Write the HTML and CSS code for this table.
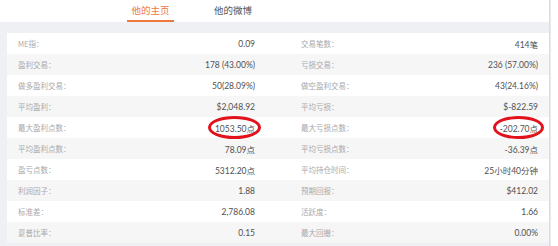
FILE: index.html
```html
<!DOCTYPE html>
<html lang="zh">
<head>
<meta charset="utf-8">
<link rel="stylesheet" href="styles.css">
</head>
<body>
<div class="panel">
  <header class="tabs">
    <span class="tab active">他的主页</span>
    <span class="tab">他的微博</span>
  </header>
  <div class="card">
    <div class="row">
      <div class="cell"><span class="label">ME指：</span><span class="value">0.09</span></div>
      <div class="cell"><span class="label">交易笔数：</span><span class="value">414笔</span></div>
    </div>
    <div class="row">
      <div class="cell"><span class="label">盈利交易：</span><span class="value">178 (43.00%)</span></div>
      <div class="cell"><span class="label">亏损交易：</span><span class="value">236 (57.00%)</span></div>
    </div>
    <div class="row">
      <div class="cell"><span class="label">做多盈利交易：</span><span class="value">50(28.09%)</span></div>
      <div class="cell"><span class="label">做空盈利交易：</span><span class="value">43(24.16%)</span></div>
    </div>
    <div class="row">
      <div class="cell"><span class="label">平均盈利：</span><span class="value">$2,048.92</span></div>
      <div class="cell"><span class="label">平均亏损：</span><span class="value">$-822.59</span></div>
    </div>
    <div class="row">
      <div class="cell"><span class="label">最大盈利点数：</span><span class="value marked">1053.50点<i class="ring"></i></span></div>
      <div class="cell"><span class="label">最大亏损点数：</span><span class="value marked">-202.70点<i class="ring"></i></span></div>
    </div>
    <div class="row">
      <div class="cell"><span class="label">平均盈利点数：</span><span class="value">78.09点</span></div>
      <div class="cell"><span class="label">平均亏损点数：</span><span class="value">-36.39点</span></div>
    </div>
    <div class="row">
      <div class="cell"><span class="label">盈亏点数：</span><span class="value">5312.20点</span></div>
      <div class="cell"><span class="label">平均持仓时间：</span><span class="value">25小时40分钟</span></div>
    </div>
    <div class="row">
      <div class="cell"><span class="label">利润因子：</span><span class="value">1.88</span></div>
      <div class="cell"><span class="label">预期回报：</span><span class="value">$412.02</span></div>
    </div>
    <div class="row">
      <div class="cell"><span class="label">标准差：</span><span class="value">2,786.08</span></div>
      <div class="cell"><span class="label">活跃度：</span><span class="value">1.66</span></div>
    </div>
    <div class="row">
      <div class="cell"><span class="label">夏普比率：</span><span class="value">0.15</span></div>
      <div class="cell"><span class="label">最大回撤：</span><span class="value">0.00%</span></div>
    </div>
  </div>
</div>
</body>
</html>
```

FILE: styles.css
```css
html, body {
  margin: 0;
  padding: 0;
  background: #ffffff;
}
body {
  font-family: "Lato", "Noto Sans CJK SC", sans-serif;
  width: 558px;
  height: 246px;
  overflow: hidden;
}
.panel {
  width: 549px;
  height: 246px;
  background: #eff0f3;
  box-shadow: 1px 0 0 #dcdde0, 2px 0 0 #e9eaed;
}
.tabs {
  height: 22px;
  background: #ffffff;
  display: flex;
  align-items: flex-start;
  padding-left: 127px;
  gap: 40px;
  box-sizing: border-box;
}
.tab {
  font-family: "Noto Sans CJK SC", sans-serif;
  font-size: 9.5px;
  line-height: 20px;
  color: #555;
  height: 20px;
  box-sizing: border-box;
}
.tab.active {
  color: #f0773c;
  width: 47px;
  text-align: center;
  border-bottom: 2px solid #f0773c;
  height: 22px;
}
.card {
  margin: 11px 0 0 7px;
  background: #ffffff;
}
.row {
  display: flex;
  gap: 24px;
  height: 21px;
  align-items: center;
  background: #ffffff;
}
.row:nth-child(even) {
  background: #f6f6f7;
}
.cell {
  flex: 1;
  display: flex;
  justify-content: space-between;
  align-items: center;
  padding: 0 11px;
}
.label {
  font-family: "Noto Sans CJK SC", sans-serif;
  font-size: 7.5px;
  color: #a9a9ab;
}
.value {
  font-size: 8.5px;
  color: #505050;
}
.marked {
  position: relative;
}
.ring {
  position: absolute;
  border: 3px solid #e2121c;
  border-radius: 50%;
  top: -6px;
  bottom: -5px;
  left: -7px;
  right: -6px;
}
```
